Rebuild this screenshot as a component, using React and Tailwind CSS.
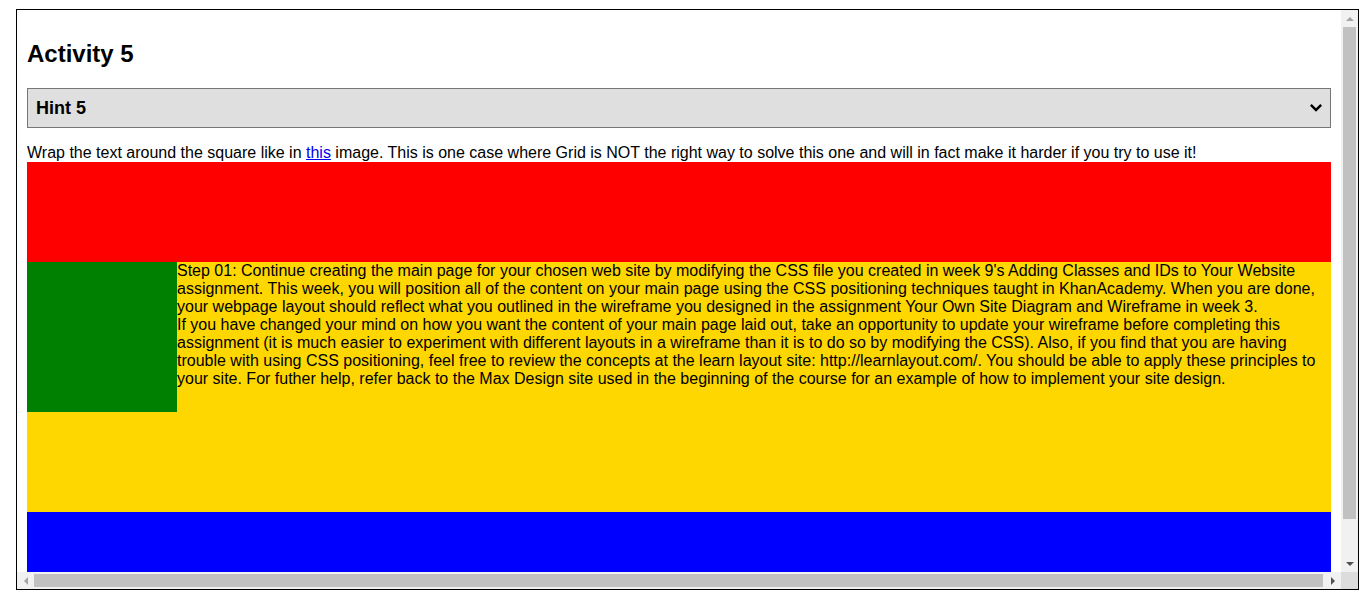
import React from 'react';

const Chevron = () => (
    <svg width="12" height="8" viewBox="0 0 12 8">
        <path d="M0 1.7 L1.7 0 L6 4.3 L10.3 0 L12 1.7 L6 7.7 Z" fill="#000" />
    </svg>
);

// small scrollbar arrows
const Arrow = ({ dir, dark }) => {
    const fill = dark ? '#505050' : '#a3a3a3';
    const pts = {
        up: '0,4 4,0 8,4',
        down: '0,0 8,0 4,4',
        left: '4,0 4,8 0,4',
        right: '0,0 0,8 4,4',
    }[dir];
    const vertical = dir === 'up' || dir === 'down';
    return (
        <svg width={vertical ? 8 : 4} height={vertical ? 4 : 8} viewBox={vertical ? '0 0 8 4' : '0 0 4 8'}>
            <polygon points={pts} fill={fill} />
        </svg>
    );
};

export default function App() {
    return (
        <div className="w-[1366px] h-[595px] bg-white pl-4 pt-[9px] text-black font-['Liberation_Sans',Arial,sans-serif]">
            {/* Frame */}
            <div className="w-[1343px] h-[581px] border border-black grid grid-cols-[1fr_17px] grid-rows-[1fr_17px]">
                {/* Page content */}
                <div className="overflow-hidden px-[10px] pt-[30px]">
                    <h2 className="text-[24px] leading-[28px] font-bold">Activity 5</h2>

                    <div className="mt-5 h-10 flex items-center justify-between border border-[#767676] bg-[#dfdfdf] pl-2 pr-2">
                        <span className="text-[18px] font-bold">Hint 5</span>
                        <Chevron />
                    </div>

                    <p className="mt-4 text-[16px] leading-[18px] whitespace-nowrap">
                        Wrap the text around the square like in{' '}
                        <a href="#" className="text-[#0000ee] underline">this</a>{' '}
                        image. This is one case where Grid is NOT the right way to solve this one and will in fact make it harder if you try to use it!
                    </p>

                    <div className="h-[100px] bg-[#ff0000]" />

                    <div className="h-[250px] bg-[#ffd700] text-[16px] leading-[18px]">
                        <div className="float-left w-[150px] h-[150px] bg-[#008000]" />
                        Step 01: Continue creating the main page for your chosen web site by modifying the CSS file you created in week 9's Adding Classes and IDs to Your Website assignment. This week, you will position all of the content on your main page using the CSS positioning techniques taught in KhanAcademy. When you are done, your webpage layout should reflect what you outlined in the wireframe you designed in the assignment Your Own Site Diagram and Wireframe in week 3.
                        <br />
                        If you have changed your mind on how you want the content of your main page laid out, take an opportunity to update your wireframe before completing this assignment (it is much easier to experiment with different layouts in a wireframe than it is to do so by modifying the CSS). Also, if you find that you are having trouble with using CSS positioning, feel free to review the concepts at the learn layout site: http://learnlayout.com/. You should be able to apply these principles to your site. For futher help, refer back to the Max Design site used in the beginning of the course for an example of how to implement your site design.
                    </div>

                    <div className="h-[100px] bg-[#0000ff]" />
                </div>

                {/* Vertical scrollbar */}
                <div className="bg-[#f1f1f1] flex flex-col">
                    <div className="h-[17px] flex items-center justify-center">
                        <Arrow dir="up" />
                    </div>
                    <div className="h-[492px] mx-[2px] bg-[#c1c1c1]" />
                    <div className="flex-1" />
                    <div className="h-[17px] flex items-center justify-center">
                        <Arrow dir="down" dark />
                    </div>
                </div>

                {/* Horizontal scrollbar */}
                <div className="bg-[#f1f1f1] flex">
                    <div className="w-[17px] flex items-center justify-center">
                        <Arrow dir="left" />
                    </div>
                    <div className="flex-1 my-[2px] mr-px bg-[#c1c1c1]" />
                    <div className="w-[17px] flex items-center justify-center">
                        <Arrow dir="right" dark />
                    </div>
                </div>

                {/* Corner */}
                <div className="bg-[#dcdcdc]" />
            </div>
        </div>
    );
}
